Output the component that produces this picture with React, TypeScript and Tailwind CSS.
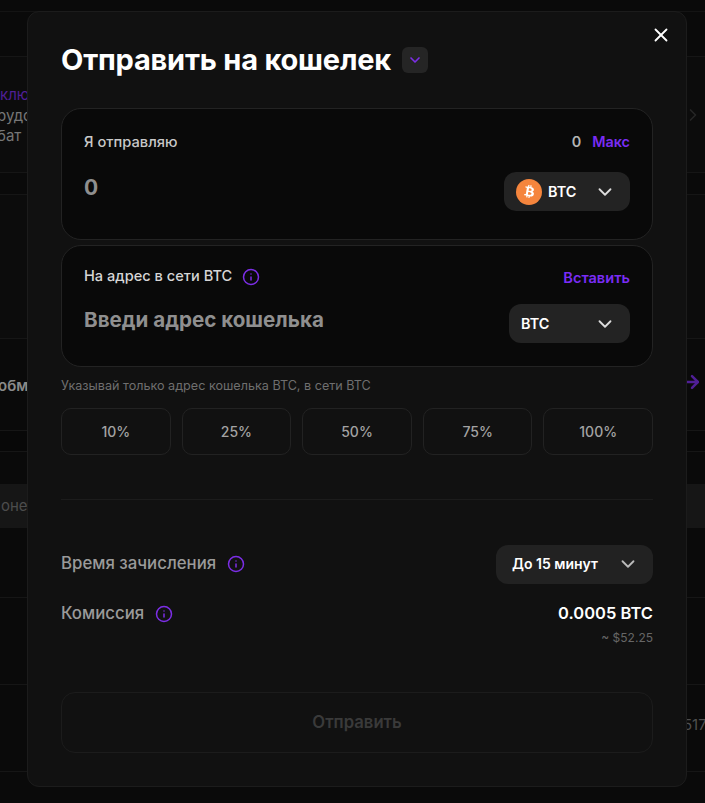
import { ChevronDown, ChevronRight, ArrowRight, Info, X } from "lucide-react";
import { FaBtc } from "react-icons/fa";

const percents = ["10%", "25%", "50%", "75%", "100%"];

function InfoIcon() {
  return <Info className="w-[18px] h-[18px] text-[#7c2ee6] shrink-0" strokeWidth={2} />;
}

// dimmed page that shows around the modal
function Backdrop() {
  return (
    <div className="h-[803px] overflow-hidden bg-[#0a0a0a] text-[15px] leading-5">
      <div className="h-[12px] border-b border-[#141414]" />
      <div className="h-[45px] border-b border-[#161616]" />
      <div className="h-[116px] border-b border-[#161616] flex justify-between bg-[#0c0c0c]">
        <div className="flex flex-col pt-[28px] whitespace-nowrap text-[#777777]">
          <span className="text-[#4f1f96]">клю</span>
          <span className="-ml-[3px] mt-[1px]">рудо</span>
          <span className="-ml-[3px]">бат</span>
        </div>
        <ChevronRight className="w-5 h-5 mt-[48px] mr-[2px] text-[#262626]" />
      </div>
      <div className="h-[22px] border-b border-[#161616]" />
      <div className="h-[144px] border-b border-[#161616] bg-[#0c0c0c]" />
      <div className="h-[91px] flex justify-between items-center">
        <div className="-ml-[2px] mt-[2px] whitespace-nowrap font-semibold text-[#8a8a8a]">обм</div>
        <ArrowRight className="w-5 h-5 mr-[3px] mb-[6px] text-[#4f1f96]" strokeWidth={3} />
      </div>
      <div className="h-[22px] border-y border-[#161616] bg-[#080808]" />
      <div className="h-[32px]" />
      <div className="h-[44px] bg-[#161616] flex items-center">
        <div className="ml-[1px] whitespace-nowrap text-[#4d4d4d]">оне</div>
      </div>
      <div className="h-[70px] border-b border-[#161616]" />
      <div className="h-[87px] border-b border-[#161616]" />
      <div className="h-[87px] border-b border-[#161616] flex justify-end">
        <span className="w-[22px] mt-[30px] whitespace-nowrap text-[#4f4f4f]">517</span>
      </div>
    </div>
  );
}

export default function App() {
  return (
    <div className="relative w-[705px] h-[803px] overflow-hidden font-['Inter',sans-serif]">
      <Backdrop />

      <div className="absolute left-[27px] top-[11px] w-[660px] h-[776px] rounded-xl bg-[#111111] border border-[#1c1c1c] px-[33px] pt-[28px]">
        <button className="absolute right-[14px] top-[12px] text-white">
          <X className="w-[22px] h-[22px]" strokeWidth={2} />
        </button>

        <div className="flex items-center gap-[11px] h-[40px]">
          <h2 className="text-[29px] leading-10 font-bold text-white tracking-[-0.2px]">Отправить на кошелек</h2>
          <div className="w-[26px] h-[26px] rounded-md bg-[#252525] flex items-center justify-center">
            <ChevronDown className="w-[16px] h-[16px] text-[#7c2ee6]" strokeWidth={2.5} />
          </div>
        </div>

        <div className="mt-[28px] h-[132px] rounded-[20px] bg-[#090909] border border-[#232323] px-[22px] pt-[23px]">
          <div className="flex justify-between items-center h-[20px]">
            <span className="text-[14.7px] font-medium text-[#c8c8c8]">Я отправляю</span>
            <div className="flex gap-[11px] text-[14.4px] font-semibold">
              <span className="text-[#b4b4b4]">0</span>
              <span className="text-[#7a2cf5]">Макс</span>
            </div>
          </div>
          <div className="flex justify-between items-start mt-[20px]">
            <span className="text-[21px] leading-8 font-bold text-[#8f8f8f]">0</span>
            <div className="w-[126px] h-[39px] rounded-xl bg-[#232323] flex items-center pl-[12px] pr-[14px]">
              <div className="w-[26px] h-[26px] rounded-full bg-[#f5853d] flex items-center justify-center">
                <FaBtc className="w-[13px] h-[13px] text-white rotate-[10deg]" />
              </div>
              <span className="ml-[6px] text-[14.4px] font-semibold text-white">BTC</span>
              <ChevronDown className="ml-auto w-[22px] h-[22px] text-[#dddddd]" strokeWidth={2} />
            </div>
          </div>
        </div>

        <div className="mt-[5px] h-[122px] rounded-[20px] bg-[#090909] border border-[#232323] px-[22px] pt-[19px]">
          <div className="flex justify-between items-center h-[24px]">
            <div className="flex items-center gap-[10px]">
              <span className="text-[14.6px] font-medium text-[#d6d6d6]">На адрес в сети BTC</span>
              <InfoIcon />
            </div>
            <span className="text-[14.6px] font-semibold text-[#7a2cf5] mt-[4px]">Вставить</span>
          </div>
          <div className="flex justify-between items-start mt-[15px]">
            <span className="text-[20.6px] leading-7 font-bold text-[#8f8f8f] mt-[2px]">Введи адрес кошелька</span>
            <div className="w-[121px] h-[39px] rounded-xl bg-[#232323] flex items-center pl-[12px] pr-[14px]">
              <span className="text-[14.4px] font-semibold text-white">BTC</span>
              <ChevronDown className="ml-auto w-[22px] h-[22px] text-[#dddddd]" strokeWidth={2} />
            </div>
          </div>
        </div>

        <p className="mt-[11px] text-[12.6px] leading-4 text-[#6f6f6f]">Указывай только адрес кошелька BTC, в сети BTC</p>

        <div className="mt-[14px] grid grid-cols-5 gap-[11px]">
          {percents.map((p) => (
            <button
              key={p}
              className="h-[47px] rounded-[10px] border border-[#222222] text-sm font-medium text-[#a3a3a3]"
            >
              {p}
            </button>
          ))}
        </div>

        <div className="mt-[44px] border-t border-[#1c1c1c]" />

        <div className="mt-[44px] flex justify-between items-center h-[40px]">
          <div className="flex items-center gap-[11px]">
            <span className="text-[16.8px] font-medium text-[#9a9a9a]">Время зачисления</span>
            <InfoIcon />
          </div>
          <div className="w-[157px] h-[39px] rounded-xl bg-[#222222] flex items-center pl-[16px] pr-[14px]">
            <span className="text-sm font-semibold text-white">До 15 минут</span>
            <ChevronDown className="ml-auto w-[22px] h-[22px] text-[#bbbbbb]" strokeWidth={2} />
          </div>
        </div>

        <div className="mt-[17px] flex justify-between items-start">
          <div className="flex items-center gap-[11px] h-[24px] mt-[1px]">
            <span className="text-[16.8px] font-medium text-[#9a9a9a]">Комиссия</span>
            <InfoIcon />
          </div>
          <div className="flex flex-col items-end">
            <span className="text-[16.5px] leading-6 font-semibold text-white">0.0005 BTC</span>
            <span className="text-xs leading-4 mt-[5px] text-[#666666]">~ $52.25</span>
          </div>
        </div>

        <button className="mt-[46px] w-full h-[61px] rounded-[14px] border border-[#1c1c1c] text-[16.7px] font-semibold text-[#3a3a3a]">
          Отправить
        </button>
      </div>
    </div>
  );
}
